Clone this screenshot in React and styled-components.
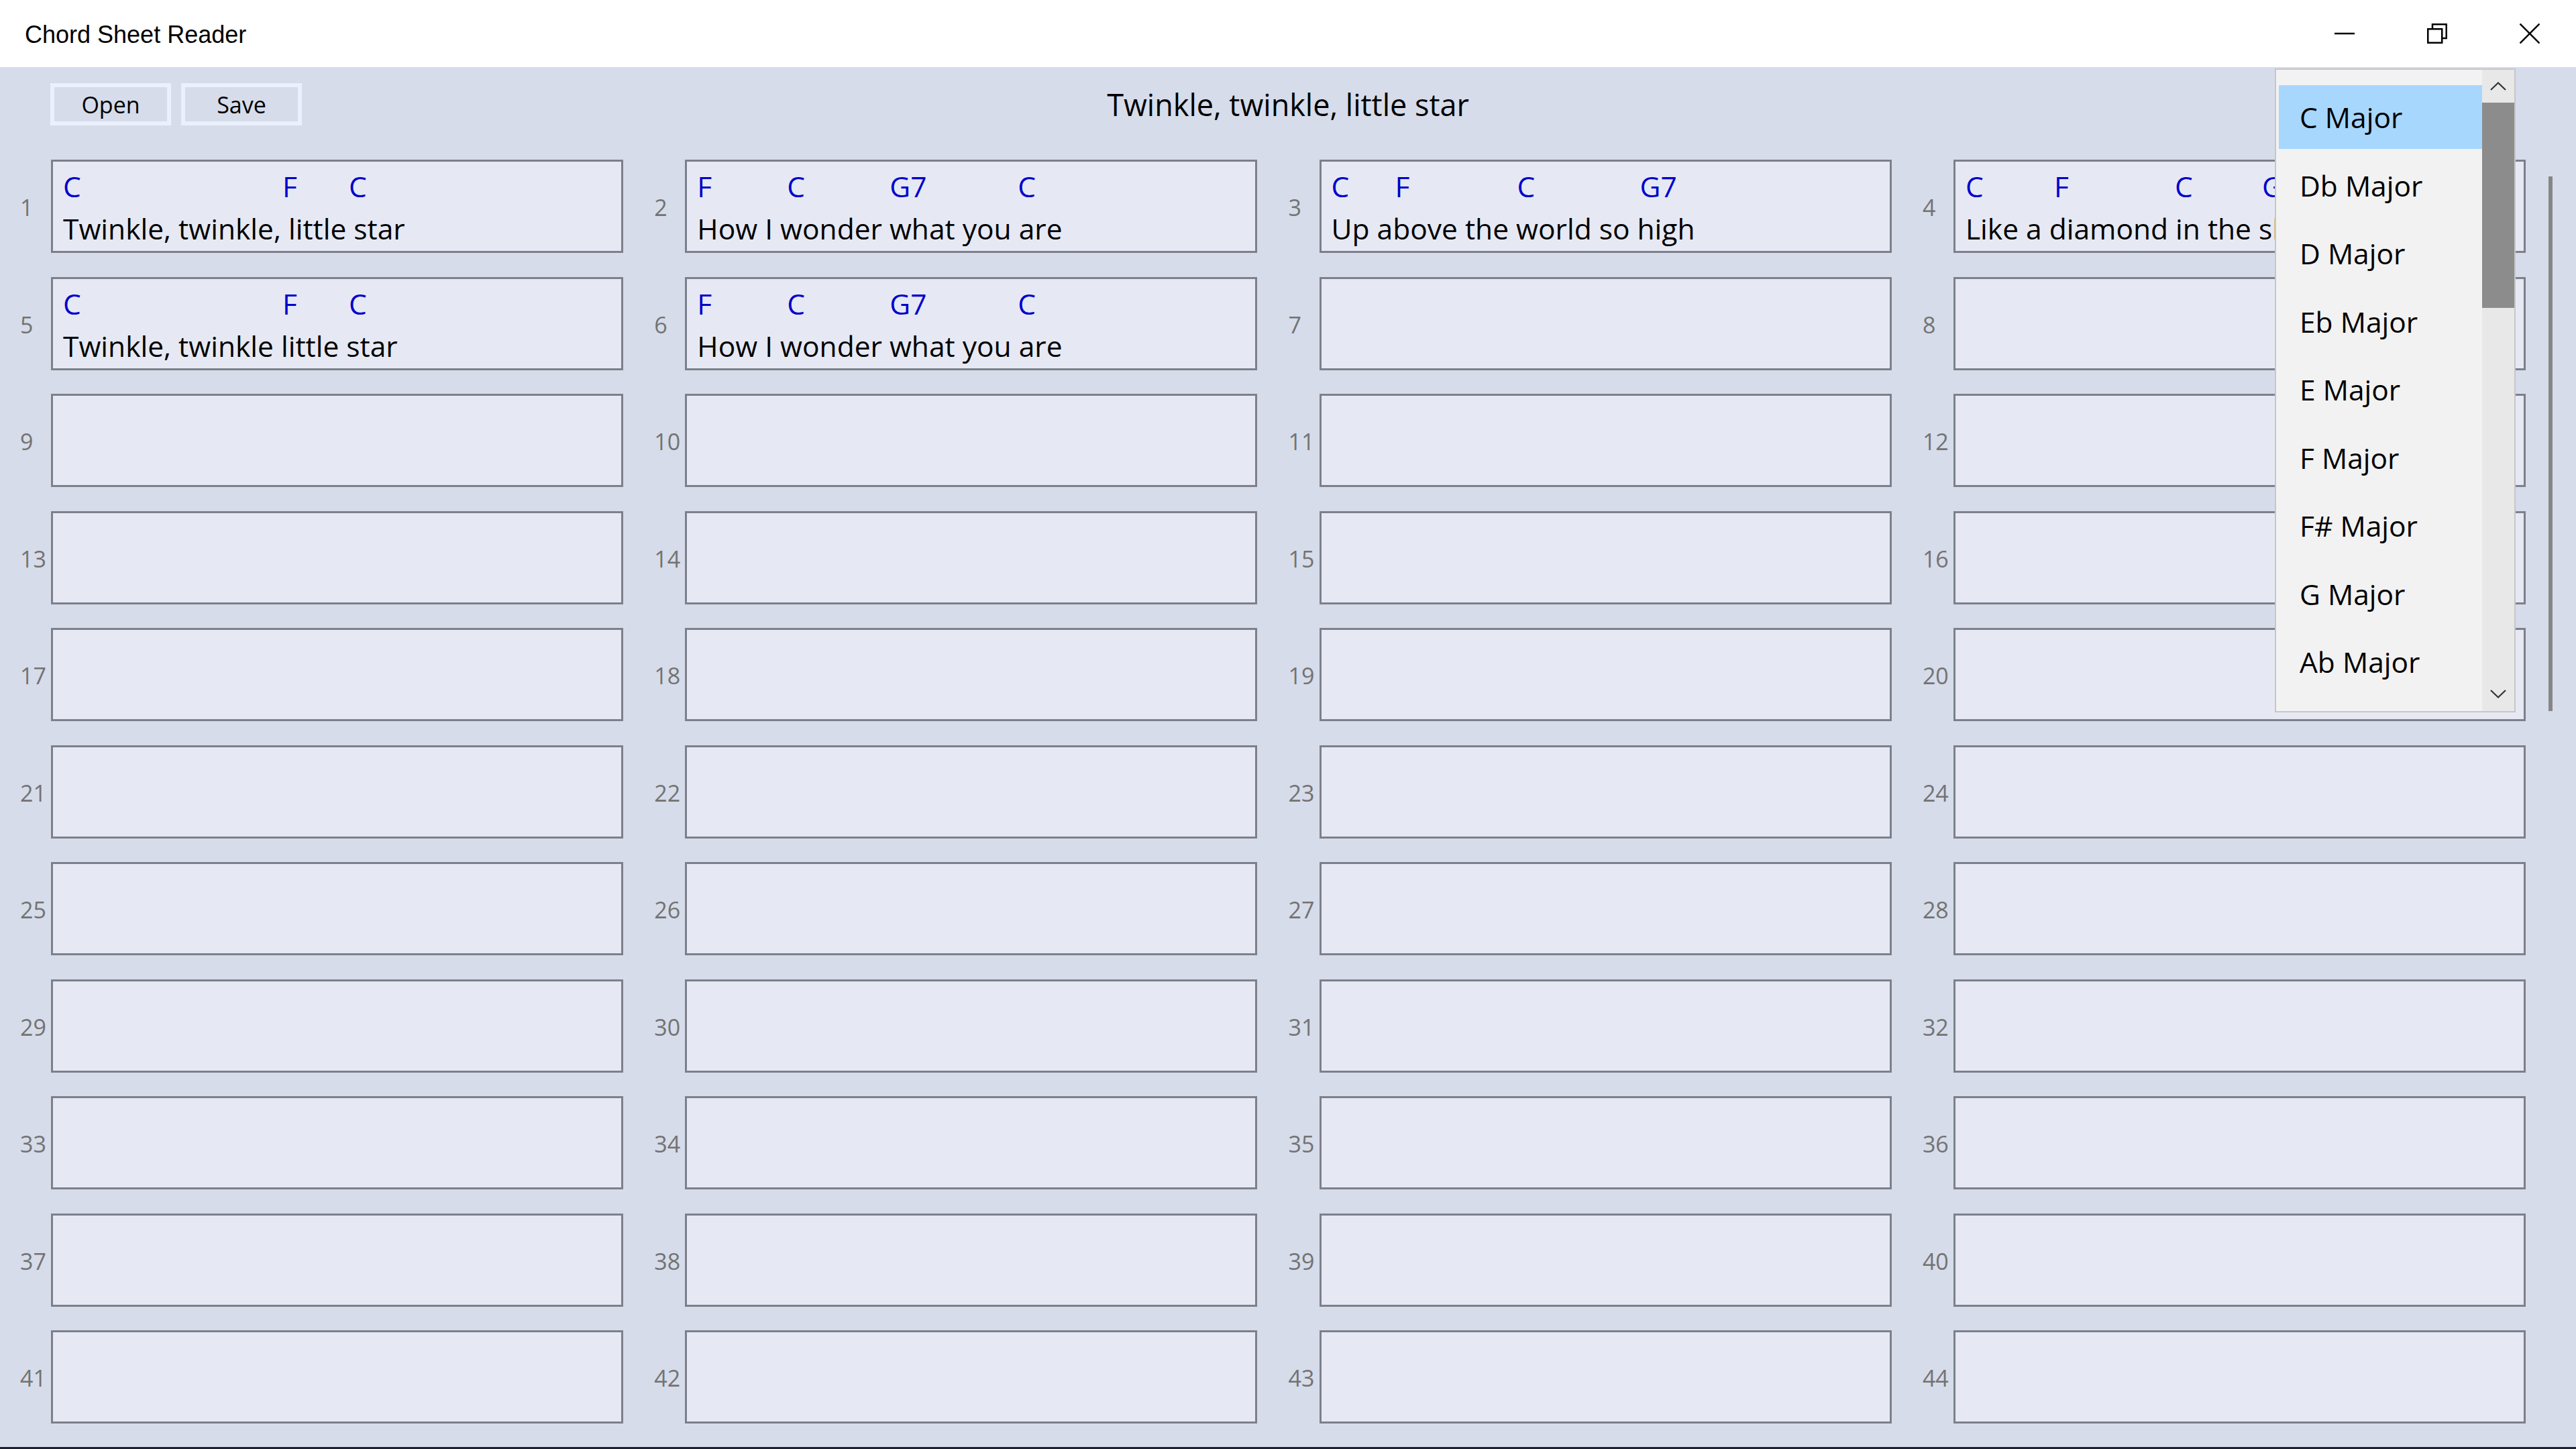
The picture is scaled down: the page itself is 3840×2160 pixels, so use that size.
import React from 'react';
import styled, { createGlobalStyle } from 'styled-components';

const GlobalStyle = createGlobalStyle`
  html, body {
    margin: 0;
    padding: 0;
  }
  body {
    width: 3840px;
    height: 2160px;
    overflow: hidden;
    font-family: "Open Sans", "Noto Sans", sans-serif;
  }
  * {
    box-sizing: border-box;
  }
`;

const Window = styled.div`
  width: 3840px;
  height: 2160px;
  display: flex;
  flex-direction: column;
  background: #d6dcea;
  border-bottom: 3px solid #1c2030;
`;

const TitleBar = styled.div`
  height: 100px;
  flex: none;
  display: flex;
  align-items: center;
  padding-left: 37px;
  background: #ffffff;
`;

const AppTitle = styled.div`
  flex: 1;
  font-family: "Liberation Sans", Arial, sans-serif;
  font-size: 36px;
  color: #000;
  padding-top: 4px;
`;

const Controls = styled.div`
  display: flex;
  height: 100%;
`;

const ControlButton = styled.div`
  width: 138px;
  height: 100%;
  display: flex;
  align-items: center;
  justify-content: center;
`;

const Content = styled.div`
  flex: 1;
  position: relative;
  overflow: hidden;
`;

const Toolbar = styled.div`
  display: grid;
  grid-template-columns: 1fr auto 1fr;
  align-items: center;
  height: 87px;
  padding: 24px 75px 0;
`;

const ButtonGroup = styled.div`
  display: flex;
  gap: 15px;
`;

const ToolButton = styled.button`
  width: 180px;
  height: 63px;
  padding: 0;
  border: 6px solid #eaf1fc;
  background: transparent;
  font-family: "Open Sans", sans-serif;
  font-size: 34px;
  color: #000;
`;

const SongTitle = styled.div`
  font-size: 45px;
  color: #000;
`;

const Sheet = styled.div`
  display: grid;
  grid-template-columns: repeat(4, 929px);
  column-gap: 16.3px;
  row-gap: 35.5px;
  padding-top: 51px;
`;

const Cell = styled.div`
  display: flex;
  align-items: center;
`;

const LineNumber = styled.div`
  width: 76px;
  padding: 3px 0 0 30px;
  font-size: 34px;
  color: #737373;
`;

const Card = styled.div`
  width: 853px;
  height: 139px;
  padding: 6px 15px 0;
  border: 3px solid #7d808b;
  background: #e6e9f4;
  overflow: hidden;
  white-space: nowrap;
`;

const ChordLine = styled.div`
  position: relative;
  height: 63px;
  line-height: 62px;
  font-size: 42.5px;
  color: #0000cd;
`;

const Chord = styled.span`
  position: absolute;
  top: 0;
  left: ${(p) => p.$x}px;
`;

const Lyric = styled.div`
  height: 62px;
  line-height: 62px;
  font-size: 42.5px;
  color: #000;
`;

const Dropdown = styled.div`
  position: absolute;
  top: 2px;
  left: 3391px;
  width: 359px;
  height: 960px;
  display: flex;
  border: 2px solid #c6c6c6;
  background: #f2f2f2;
`;

const KeyList = styled.div`
  flex: 1;
  padding: 23px 0 0 4px;
  overflow: hidden;
`;

const KeyItem = styled.div`
  height: 95px;
  margin-bottom: 6.5px;
  padding-left: 31px;
  line-height: 95px;
  font-size: 42.5px;
  color: #000;
  background: ${(p) => (p.$selected ? '#a8d7fd' : 'transparent')};
`;

const ListScroll = styled.div`
  width: 48px;
  display: flex;
  flex-direction: column;
  background: #e8e8e8;
`;

const ArrowBox = styled.div`
  height: ${(p) => p.$h}px;
  display: flex;
  align-items: center;
  justify-content: center;
`;

const ListThumb = styled.div`
  height: 306px;
  background: #8c8c8c;
`;

const ListTrack = styled.div`
  flex: 1;
`;

const PageScrollbar = styled.div`
  position: absolute;
  top: 163px;
  left: 3799px;
  width: 6px;
  height: 797px;
  background: #868686;
`;

const lines = [
  { chords: [['C', 0], ['F', 327], ['C', 426]], lyric: 'Twinkle, twinkle, little star' },
  { chords: [['F', 0], ['C', 134], ['G7', 287], ['C', 478]], lyric: 'How I wonder what you are' },
  { chords: [['C', 0], ['F', 95], ['C', 277], ['G7', 460]], lyric: 'Up above the world so high' },
  { chords: [['C', 0], ['F', 132], ['C', 312], ['G7', 442]], lyric: 'Like a diamond in the sky' },
  { chords: [['C', 0], ['F', 327], ['C', 426]], lyric: 'Twinkle, twinkle little star' },
  { chords: [['F', 0], ['C', 134], ['G7', 287], ['C', 478]], lyric: 'How I wonder what you are' },
];

const keys = [
  'C Major', 'Db Major', 'D Major', 'Eb Major', 'E Major',
  'F Major', 'F# Major', 'G Major', 'Ab Major',
];

const MinimizeIcon = () => (
  <svg width="30" height="30" viewBox="0 0 30 30">
    <line x1="0" y1="15" x2="30" y2="15" stroke="#000" strokeWidth="2.5" />
  </svg>
);

const RestoreIcon = () => (
  <svg width="30" height="30" viewBox="0 0 30 30" fill="none" stroke="#000" strokeWidth="2.5">
    <rect x="1.25" y="8.25" width="21" height="20.5" />
    <path d="M8 8 V1.25 H28.75 V22 H22.5" />
  </svg>
);

const CloseIcon = () => (
  <svg width="30" height="30" viewBox="0 0 30 30" stroke="#000" strokeWidth="2.5">
    <line x1="0.5" y1="0.5" x2="29.5" y2="29.5" />
    <line x1="29.5" y1="0.5" x2="0.5" y2="29.5" />
  </svg>
);

const Chevron = ({ up }) => (
  <svg width="24" height="13" viewBox="0 0 24 13" fill="none" stroke="#333" strokeWidth="2.2">
    <path d={up ? 'M1 12 L12 1.5 L23 12' : 'M1 1 L12 11.5 L23 1'} />
  </svg>
);

export default function App() {
  const rows = Array.from({ length: 44 }, (_, i) => lines[i] || null);

  return (
    <>
      <GlobalStyle />
      <Window>
        <TitleBar>
          <AppTitle>Chord Sheet Reader</AppTitle>
          <Controls>
            <ControlButton><MinimizeIcon /></ControlButton>
            <ControlButton><RestoreIcon /></ControlButton>
            <ControlButton><CloseIcon /></ControlButton>
          </Controls>
        </TitleBar>
        <Content>
          <Toolbar>
            <ButtonGroup>
              <ToolButton>Open</ToolButton>
              <ToolButton>Save</ToolButton>
            </ButtonGroup>
            <SongTitle>Twinkle, twinkle, little star</SongTitle>
            <div />
          </Toolbar>
          <Sheet>
            {rows.map((line, i) => (
              <Cell key={i}>
                <LineNumber>{i + 1}</LineNumber>
                <Card>
                  {line && (
                    <>
                      <ChordLine>
                        {line.chords.map(([name, x], j) => (
                          <Chord key={j} $x={x}>{name}</Chord>
                        ))}
                      </ChordLine>
                      <Lyric>{line.lyric}</Lyric>
                    </>
                  )}
                </Card>
              </Cell>
            ))}
          </Sheet>
          <PageScrollbar />
          <Dropdown>
            <KeyList>
              {keys.map((k, i) => (
                <KeyItem key={k} $selected={i === 0}>{k}</KeyItem>
              ))}
            </KeyList>
            <ListScroll>
              <ArrowBox $h={49}><Chevron up /></ArrowBox>
              <ListThumb />
              <ListTrack />
              <ArrowBox $h={52}><Chevron /></ArrowBox>
            </ListScroll>
          </Dropdown>
        </Content>
      </Window>
    </>
  );
}
